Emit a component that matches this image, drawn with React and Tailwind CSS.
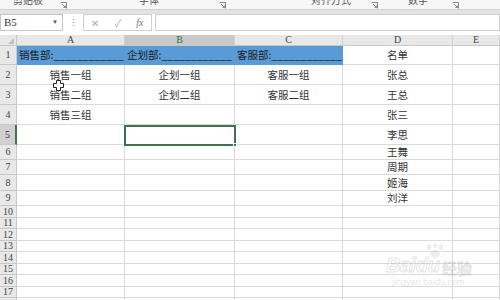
import React from 'react';

const cols = [
  { key: 'A', w: 'w-[108px]' },
  { key: 'B', w: 'w-[110px]' },
  { key: 'C', w: 'w-[108px]' },
  { key: 'D', w: 'w-[110px]' },
  { key: 'E', w: 'w-[47px]' },
];

const blank = { A: '', B: '', C: '', D: '', E: '' };

const rows = [
  { n: 1, h: 'h-[19px]', head: true, D: '名单' },
  { n: 2, h: 'h-[20px]', A: '销售一组', B: '企划一组', C: '客服一组', D: '张总' },
  { n: 3, h: 'h-[20px]', A: '销售二组', B: '企划二组', C: '客服二组', D: '王总' },
  { n: 4, h: 'h-[20px]', A: '销售三组', D: '张三' },
  { n: 5, h: 'h-[20px]', D: '李思' },
  { n: 6, h: 'h-[15px]', D: '王舞' },
  { n: 7, h: 'h-[15px]', D: '周期' },
  { n: 8, h: 'h-[16px]', D: '姬海' },
  { n: 9, h: 'h-[15px]', D: '刘洋' },
  { n: 10, h: 'h-[12px]' },
  { n: 11, h: 'h-[11px]' },
  { n: 12, h: 'h-[12px]' },
  { n: 13, h: 'h-[11px]' },
  { n: 14, h: 'h-[12px]' },
  { n: 15, h: 'h-[11px]' },
  { n: 16, h: 'h-[12px]' },
  { n: 17, h: 'h-[11px]' },
  { n: 18, h: 'h-[12px]' },
];

const heads = {
  A: '销售部:____________',
  B: '企划部:____________',
  C: '客服部:____________',
};

function Launcher() {
  return (
    <svg width="7" height="7" viewBox="0 0 7 7" className="inline-block">
      <path d="M0.5 0.5h6v6" fill="none" stroke="#888" strokeWidth="1" />
      <path d="M2 2l3.5 3.5M3.5 5.5h2v-2" fill="none" stroke="#888" strokeWidth="1" />
    </svg>
  );
}

function Cursor() {
  return (
    <svg width="11" height="11" viewBox="0 0 11 11" className="absolute left-[53px] top-[80px]">
      <path d="M3.5 0.5h4v3h3v4h-3v3h-4v-3h-3v-4h3z" fill="#fff" stroke="#222" strokeWidth="1" />
    </svg>
  );
}

function Watermark() {
  return (
    <div className="absolute left-[386px] top-[243px] opacity-25 pointer-events-none select-none">
      <svg width="30" height="16" viewBox="0 0 30 16" className="absolute left-[34px] top-[0px]">
        <g fill="#bbb">
          <ellipse cx="9" cy="4" rx="2.2" ry="3" />
          <ellipse cx="15" cy="2.6" rx="2.2" ry="2.6" />
          <ellipse cx="21" cy="4" rx="2.2" ry="3" />
          <ellipse cx="15" cy="11" rx="5" ry="4" />
        </g>
      </svg>
      <div className="flex items-end mt-[12px] leading-none">
        <span className="text-[20px] font-bold italic text-white [-webkit-text-stroke:1px_#999] tracking-tight [font-family:'Liberation_Sans',sans-serif]">Bai</span>
        <span className="text-[20px] font-bold italic text-white [-webkit-text-stroke:1px_#999] [font-family:'Liberation_Sans',sans-serif]">du</span>
        <span className="text-[15px] text-white [-webkit-text-stroke:1px_#999] ml-[2px] [font-family:'Noto_Sans_CJK_SC',sans-serif]">经验</span>
      </div>
      <div className="text-[9px] text-[#999] mt-[3px] ml-[6px] leading-none [font-family:'Liberation_Sans',sans-serif]">jingyan.baidu.com</div>
    </div>
  );
}

export default function App() {
  return (
    <div className="relative w-[500px] h-[300px] overflow-hidden bg-white text-[#333] [font-family:'Noto_Sans_CJK_SC','Liberation_Sans',sans-serif]">
      {/* ribbon group labels, cut at top */}
      <div className="h-[9px] bg-[#f7f7f7] overflow-hidden relative text-[10px] text-[#555] leading-none">
        <div className="flex items-start -mt-[5px]">
          <span className="ml-[13px] w-[47px]">剪贴板</span>
          <span className="mt-[4px]"><Launcher /></span>
          <span className="ml-[72px] w-[80px]">字体</span>
          <span className="mt-[4px]"><Launcher /></span>
          <span className="ml-[85px] w-[60px]">对齐方式</span>
          <span className="mt-[4px]"><Launcher /></span>
          <span className="ml-[30px] w-[44px]">数字</span>
          <span className="mt-[4px]"><Launcher /></span>
        </div>
      </div>
      <div className="h-[5px] bg-[#e3e3e3] border-t border-[#d0d0d0]" />

      {/* formula bar */}
      <div className="h-[17px] flex items-stretch bg-white">
        <div className="w-[63px] border border-[#c6c6c6] flex items-center justify-between pl-[3px] pr-[4px] text-[11px] text-[#333] [font-family:'Liberation_Serif',serif]">
          <span>B5</span>
          <span className="text-[6px] text-[#555]">▼</span>
        </div>
        <div className="w-[20px] flex items-center justify-center text-[9px] text-[#777] leading-none">⋮</div>
        <div className="w-[69px] border border-[#d0d0d0] flex items-center justify-around text-[#aaa] text-[10px]">
          <span>✕</span>
          <span>✓</span>
          <span className="italic text-[#777] [font-family:'Liberation_Serif',serif]">fx</span>
        </div>
        <div className="w-[3px]" />
        <div className="flex-1 border border-[#d0d0d0] bg-white" />
      </div>
      <div className="h-[4px] bg-white" />

      {/* sheet grid */}
      <div className="relative">
        <div className="flex h-[11px] bg-[#e8e8e8] border-b border-[#c8c8c8] text-[10px] leading-none [font-family:'Liberation_Serif',serif]">
          <div className="w-[17px] border-r border-[#c8c8c8] relative">
            <svg width="6" height="6" viewBox="0 0 6 6" className="absolute right-[2px] bottom-[1px]">
              <path d="M6 0v6H0z" fill="#c0c0c0" />
            </svg>
          </div>
          {cols.map((c) => (
            <div
              key={c.key}
              className={`${c.w} border-r border-[#d0d0d0] flex items-center justify-center ${c.key === 'B' ? 'bg-[#c9c9c9] text-[#217346]' : 'text-[#444]'}`}
            >
              {c.key}
            </div>
          ))}
        </div>

        {rows.map((r) => {
          const data = { ...blank, ...r };
          return (
            <div key={r.n} className={`flex ${r.h}`}>
              <div
                className={`w-[17px] border-b border-[#c8c8c8] flex items-center justify-center text-[10px] leading-none [font-family:'Liberation_Serif',serif] ${r.n === 5 ? 'bg-[#d0d0d0] border-r-2 border-r-[#3f7350] text-[#333]' : 'bg-[#e8e8e8] border-r border-r-[#c8c8c8] text-[#444]'}`}
              >
                {r.n}
              </div>
              {cols.map((c) => {
                const blue = r.head && c.key !== 'D' && c.key !== 'E';
                if (blue) {
                  return (
                    <div
                      key={c.key}
                      className={`${c.w} border-r border-b border-[#5b9bd5] bg-[#5b9bd5] flex items-center pl-[2px] text-[10.5px] leading-none pt-[1px] text-[#1a1a1a] whitespace-nowrap`}
                    >
                      {heads[c.key]}
                    </div>
                  );
                }
                return (
                  <div
                    key={c.key}
                    className={`${c.w} border-r border-b border-[#dadada] flex items-center justify-center whitespace-nowrap text-[10.5px] leading-none pt-[1px]`}
                  >
                    {data[c.key]}
                  </div>
                );
              })}
            </div>
          );
        })}

        {/* selected cell B5 */}
        <div className="absolute left-[124px] top-[90px] w-[112px] h-[21px] border-2 border-[#3f7350]">
          <div className="absolute -right-[3px] -bottom-[3px] w-[4px] h-[4px] bg-[#3f7350] border border-white" />
        </div>
      </div>

      <Cursor />
      <Watermark />
    </div>
  );
}
